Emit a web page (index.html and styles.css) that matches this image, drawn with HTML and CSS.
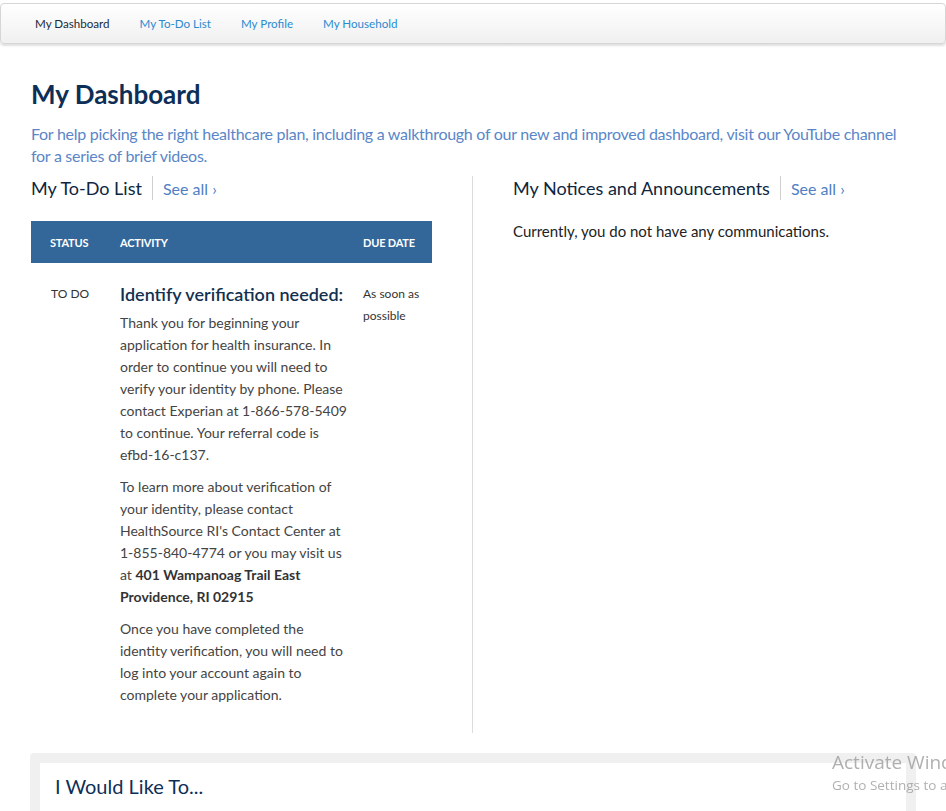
FILE: index.html
```html
<!DOCTYPE html>
<html lang="en">
<head>
<meta charset="utf-8">
<title>My Dashboard</title>
<link rel="stylesheet" href="styles.css">
</head>
<body>
<nav class="topnav">
  <a class="topnav-item is-active" href="#">My Dashboard</a>
  <a class="topnav-item" href="#">My To-Do List</a>
  <a class="topnav-item" href="#">My Profile</a>
  <a class="topnav-item" href="#">My Household</a>
</nav>

<main class="page">
  <h1 class="page-title">My Dashboard</h1>
  <p class="intro">For help picking the right healthcare plan, including a walkthrough of our new and improved dashboard, visit our YouTube channel for a series of brief videos.</p>

  <div class="columns">
    <section class="col col-left">
      <div class="section-head">
        <h2 class="section-title">My To-Do List</h2>
        <a class="see-all" href="#">See all ›</a>
      </div>

      <div class="todo">
        <div class="todo-head">
          <div class="c-status">Status</div>
          <div class="c-activity">Activity</div>
          <div class="c-due">Due Date</div>
        </div>
        <div class="todo-row">
          <div class="c-status status-text">TO DO</div>
          <div class="c-activity">
            <h3 class="todo-title">Identify verification needed:</h3>
            <p class="todo-text">Thank you for beginning your application for health insurance. In order to continue you will need to verify your identity by phone. Please contact Experian at 1-866-578-5409 to continue. Your referral code is efbd-16-c137.</p>
            <p class="todo-text">To learn more about verification of your identity, please contact HealthSource RI's Contact Center at 1-855-840-4774 or you may visit us at <strong>401 Wampanoag Trail East Providence, RI 02915</strong></p>
            <p class="todo-text">Once you have completed the identity verification, you will need to log into your account again to complete your application.</p>
          </div>
          <div class="c-due due-text">As soon as possible</div>
        </div>
      </div>
    </section>

    <section class="col col-right">
      <div class="section-head">
        <h2 class="section-title">My Notices and Announcements</h2>
        <a class="see-all" href="#">See all ›</a>
      </div>
      <p class="empty">Currently, you do not have any communications.</p>
    </section>
  </div>

  <section class="wish">
    <div class="wish-inner">
      <h2 class="wish-title">I Would Like To...</h2>
    </div>
  </section>
</main>

<div class="watermark">
  <div class="wm-1">Activate Windows</div>
  <div class="wm-2">Go to Settings to activate Windows.</div>
</div>
</body>
</html>
```

FILE: styles.css
```css
html, body {
  margin: 0;
  padding: 0;
  overflow: hidden;
  background: #fff;
}

body {
  font-family: Lato, "Open Sans", Arial, sans-serif;
  color: #333;
}

a { text-decoration: none; }

/* top navigation */
.topnav {
  margin-top: 3px;
  display: flex;
  align-items: center;
  padding-left: 34px;
  gap: 30px;
  border: 1px solid #d6d6d6;
  border-radius: 4px;
  background: linear-gradient(#ffffff, #f0f0f0);
  box-shadow: 0 2px 2px rgba(0, 0, 0, 0.12);
  box-sizing: border-box;
  height: 41px;
}

.topnav-item {
  font-size: 11.6px;
  color: #2b8bd1;
}

.topnav-item.is-active { color: #1c2a3a; }

/* page */
.page {
  width: 885px;
  margin-left: 31px;
}

.page-title {
  margin: 35px 0 0;
  font-size: 26px;
  line-height: 30px;
  font-weight: 700;
  color: #0d2f57;
}

.intro {
  margin: 14px 0 0;
  font-size: 16px;
  line-height: 22px;
  letter-spacing: -0.28px;
  color: #5a86c8;
}

.columns {
  display: grid;
  grid-template-columns: 441px 1fr;
  margin-top: 9px;
}

.col-left {
  padding-right: 40px;
  padding-bottom: 27px;
}

.col-right {
  border-left: 1px solid #dcdcdc;
  padding-left: 40px;
}

.section-head {
  display: flex;
  align-items: center;
  height: 24px;
}

.section-title {
  margin: 0;
  font-size: 18px;
  line-height: 24px;
  font-weight: 400;
  color: #0e2640;
  padding-right: 10px;
  border-right: 1px solid #d0d0d0;
}

.see-all {
  margin-left: 10px;
  font-size: 16px;
  color: #4f80c4;
}

/* to-do table */
.todo { margin-top: 21px; }

.todo-head,
.todo-row {
  display: grid;
  grid-template-columns: 89px 243px 1fr;
}

.todo-head {
  height: 42px;
  align-items: center;
  background: #336699;
  color: #fff;
  font-size: 11px;
  font-weight: 700;
  text-transform: uppercase;
  letter-spacing: -0.2px;
}

.c-status { padding-left: 19px; }

.c-activity { padding-right: 11px; }

.todo-row { padding-top: 20px; }

.status-text {
  padding-left: 20px;
  font-size: 12px;
  line-height: 22px;
  color: #333;
}

.todo-title {
  margin: 0 0 7px;
  font-size: 18px;
  line-height: 22px;
  font-weight: 600;
  color: #13314f;
  white-space: nowrap;
}

.todo-text {
  margin: 0 0 10px;
  font-size: 14px;
  line-height: 22px;
  color: #444;
}

.todo-text:last-child { margin-bottom: 0; }

.todo-text strong { color: #333; }

.due-text {
  font-size: 12px;
  line-height: 22px;
  color: #333;
}

.empty {
  margin: 20px 0 0;
  font-size: 15px;
  line-height: 22px;
  color: #222;
}

/* I would like to */
.wish {
  margin-top: 20px;
  margin-left: -1px;
  padding: 10px 10px 0;
  background: #f0f0f0;
  border-radius: 4px 4px 0 0;
}

.wish-inner {
  background: #fff;
  padding: 11px 15px 40px;
}

.wish-title {
  margin: 0;
  font-size: 20px;
  line-height: 24px;
  font-weight: 400;
  color: #0d2f57;
}

/* OS watermark overlay */
.watermark {
  position: fixed;
  left: 832px;
  top: 749px;
  white-space: nowrap;
  font-family: "Open Sans", Arial, sans-serif;
  color: rgba(150, 150, 150, 0.75);
  pointer-events: none;
}

.wm-1 { font-size: 19px; line-height: 26px; }
.wm-2 { font-size: 13.5px; line-height: 20px; }
```
